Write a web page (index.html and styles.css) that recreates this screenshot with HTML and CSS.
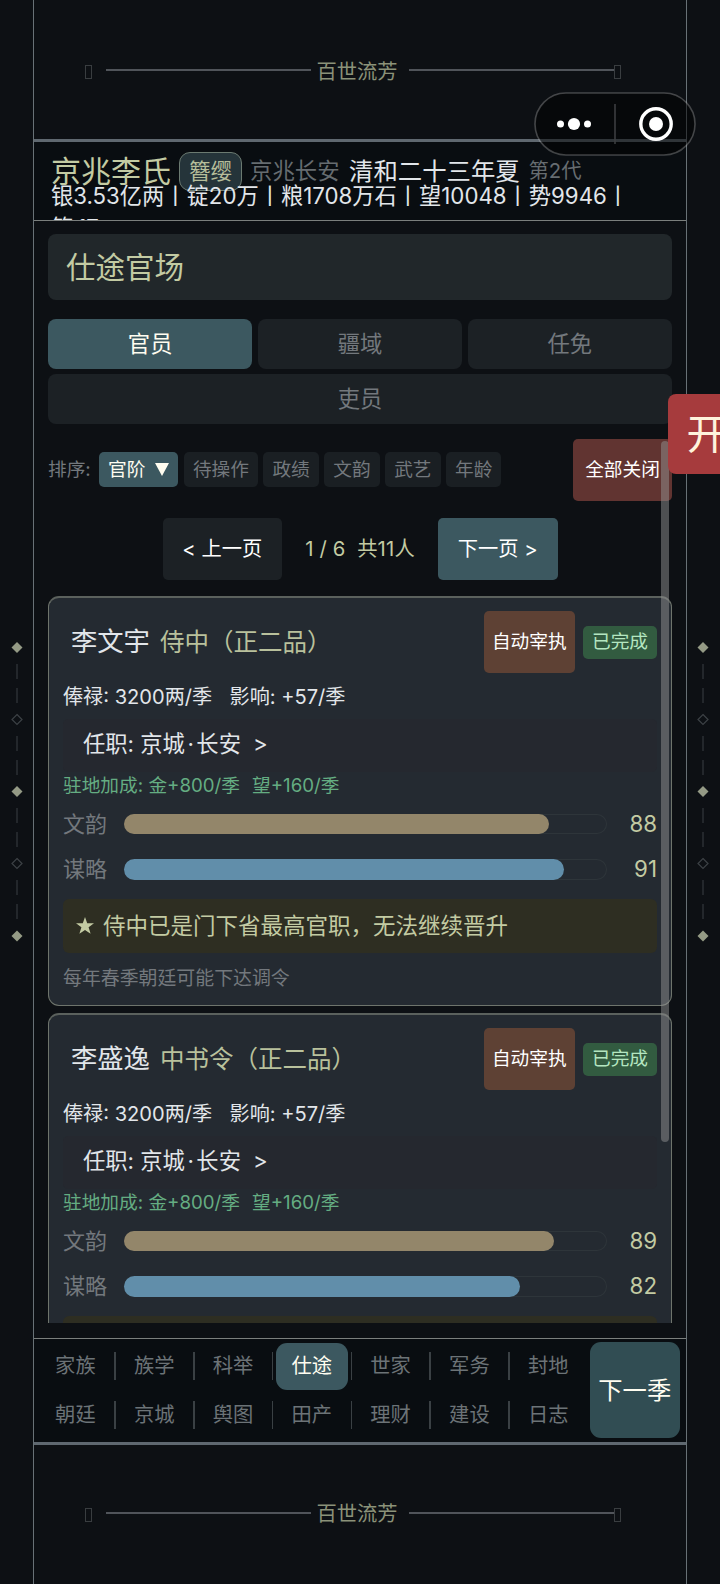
FILE: index.html
```html
<!DOCTYPE html>
<html lang="zh-CN">
<head>
<meta charset="utf-8">
<title>百世流芳</title>
<link rel="stylesheet" href="styles.css">
</head>
<body>
<div class="screen">
  <svg class="ornament" viewBox="0 0 16 300"><g class="gem"><path d="M8 2l5.500 5.500L8 13 2.500 7.500z"/><path d="M8 146l5.500 5.500L8 157l-5.500-5.500z"/><path d="M8 290.500l5.500 5.500L8 301.500l-5.500-5.500z"/></g><g class="hollow"><path d="M8 74.500l5 5-5 5-5-5z"/><path d="M8 218.500l5 5-5 5-5-5z"/></g><path class="dash" d="M8 24v15M8 48v15M8 96v15M8 120v15M8 168v15M8 192v15M8 240v15M8 264v15"/></svg>

  <div class="frame">
    <div class="banner banner-top">
      <i class="box"></i><i class="rule"></i><span>百世流芳</span><i class="rule"></i><i class="box box-end"></i>
    </div>

    <header class="status">
      <div class="identity">
        <b class="clan">京兆李氏</b><span class="tier">簪缨</span><span class="seat">京兆长安</span><span class="date">清和二十三年夏</span><span class="gen">第2代</span>
      </div>
      <div class="resources">银3.53亿两丨锭20万丨粮1708万石丨望10048丨势9946丨<br>筹<span class="count">17</span></div>
    </header>

    <main class="content">
      <h1 class="title">仕途官场</h1>
      <nav class="tabs">
        <span class="tab on">官员</span><span class="tab">疆域</span><span class="tab">任免</span><span class="tab wide">吏员</span>
      </nav>
      <div class="sort">
        <span class="sort-label">排序:</span>
        <span class="chip on">官阶 <svg class="caret" viewBox="0 0 14 13"><path d="M0 0h14L7 13z"/></svg></span><span class="chip">待操作</span><span class="chip">政绩</span><span class="chip">文韵</span><span class="chip">武艺</span><span class="chip">年龄</span>
        <span class="close-all">全部关闭</span>
      </div>
      <div class="pager">
        <span class="page-btn">&lt; 上一页</span><span class="page-info">1 / 6&nbsp; 共11人</span><span class="page-btn next">下一页 &gt;</span>
      </div>

      <article class="card">
        <div class="card-head"><span class="name">李文宇</span><span class="rank">侍中（正二品）</span><span class="auto">自动宰执</span><span class="done">已完成</span></div>
        <div class="salary"><span>俸禄: 3200两/季</span><span>影响: +57/季</span></div>
        <div class="post"><span>任职: 京城<i class="dot">·</i>长安</span><span>&gt;</span></div>
        <div class="bonus"><span>驻地加成: 金+800/季</span><span>望+160/季</span></div>
        <div class="stat"><span>文韵</span><div class="track"><div class="fill gold" style="width:88%"></div></div><b>88</b></div>
        <div class="stat"><span>谋略</span><div class="track"><div class="fill blue" style="width:91%"></div></div><b>91</b></div>
        <div class="notice"><svg class="star" viewBox="0 0 18 17"><path d="M9 0l2.200 6.300H18l-5.400 4 2 6.500L9 12.900l-5.600 3.900 2-6.500L0 6.300h6.800z"/></svg>侍中已是门下省最高官职，无法继续晋升</div>
        <p class="hint">每年春季朝廷可能下达调令</p>
      </article>

      <article class="card">
        <div class="card-head"><span class="name">李盛逸</span><span class="rank">中书令（正二品）</span><span class="auto">自动宰执</span><span class="done">已完成</span></div>
        <div class="salary"><span>俸禄: 3200两/季</span><span>影响: +57/季</span></div>
        <div class="post"><span>任职: 京城<i class="dot">·</i>长安</span><span>&gt;</span></div>
        <div class="bonus"><span>驻地加成: 金+800/季</span><span>望+160/季</span></div>
        <div class="stat"><span>文韵</span><div class="track"><div class="fill gold" style="width:89%"></div></div><b>89</b></div>
        <div class="stat"><span>谋略</span><div class="track"><div class="fill blue" style="width:82%"></div></div><b>82</b></div>
        <div class="notice"></div>
      </article>
      <i class="scrollbar"></i>
    </main>

    <footer class="dock">
      <div class="menu">
        <span>家族</span><span>族学</span><span>科举</span><span class="on"><em>仕途</em></span><span>世家</span><span>军务</span><span>封地</span>
        <span>朝廷</span><span>京城</span><span>舆图</span><span>田产</span><span>理财</span><span>建设</span><span>日志</span>
      </div>
      <div class="advance">下一季</div>
    </footer>

    <div class="banner banner-bottom">
      <i class="box"></i><i class="rule"></i><span>百世流芳</span><i class="rule"></i><i class="box box-end"></i>
    </div>
  </div>

  <svg class="ornament right" viewBox="0 0 16 300"><g class="gem"><path d="M8 2l5.500 5.500L8 13 2.500 7.500z"/><path d="M8 146l5.500 5.500L8 157l-5.500-5.500z"/><path d="M8 290.500l5.500 5.500L8 301.500l-5.500-5.500z"/></g><g class="hollow"><path d="M8 74.500l5 5-5 5-5-5z"/><path d="M8 218.500l5 5-5 5-5-5z"/></g><path class="dash" d="M8 24v15M8 48v15M8 96v15M8 120v15M8 168v15M8 192v15M8 240v15M8 264v15"/></svg>

  <svg class="capsule" viewBox="0 0 162 64"><rect x="1" y="1" width="160" height="62" rx="31"/><path d="M81 12v40"/><g><circle cx="26.500" cy="32" r="3.500"/><circle cx="40" cy="32" r="6.100"/><circle cx="53.500" cy="32" r="3.500"/><circle cx="122" cy="32" r="7"/></g><circle class="ring" cx="122" cy="32" r="15.200"/></svg>
  <div class="float-tab">开</div>
</div>
</body>
</html>
```

FILE: styles.css
```css
* { box-sizing: border-box; }
body { margin: 0; background: #0d1014; }
i, em { font-style: normal; }
b, h1 { font-weight: 400; }

.screen {
  position: relative;
  display: flex;
  width: 720px;
  height: 1584px;
  overflow: hidden;
  background: #0d1014;
  color: #e2e6ea;
  font-family: Inter, "Noto Sans CJK SC", sans-serif;
  font-size: 22px;
  line-height: 1;
  white-space: nowrap;
}

/* side ornaments */
.ornament { flex: none; width: 16px; height: 300px; margin: 640px 8px 0 9px; overflow: visible; }
.ornament.right { margin-left: 8px; }
.gem { fill: #949a85; }
.hollow { fill: none; stroke: #3c4145; stroke-width: 1.2; }
.dash { fill: none; stroke: #262b2f; stroke-width: 1.8; }

.frame {
  flex: none;
  display: flex;
  flex-direction: column;
  width: 654px;
  height: 1584px;
  border: solid #687176;
  border-width: 0 1px;
}

.banner { display: flex; align-items: center; padding-left: 51px; font-size: 20.3px; color: #8b9279; }
.banner-top { height: 139px; padding-top: 5px; }
.banner-bottom { height: 139px; }
.banner span { margin: 0 11px 0 6px; width: 81.500px; }
.rule { width: 205px; height: 2px; margin-bottom: 3px; background: #50545a; }
.box { width: 7px; height: 14px; margin: 1px 13.500px 0 0; border: 1px solid #393d40; }
.box-end { margin-right: 0; }

/* clan status header */
.status {
  height: 82px;
  padding: 10px 17px 0;
  overflow: hidden;
  border-top: 3px solid #5f6870;
  border-bottom: 1px solid #7b7f7d;
  background: #090d11;
}
.identity { display: flex; align-items: center; height: 39px; }
.clan { width: 128px; font-size: 30px; color: #c3cba3; }
.tier {
  display: flex; align-items: center; justify-content: center;
  width: 63px; height: 39px;
  border: 1px solid #6b7a71; border-radius: 11px;
  background: #25343a; color: #b5bd9a; font-size: 21.500px;
}
.seat { width: 99px; margin-left: 8px; font-size: 22.400px; color: #666c70; }
.date { width: 179.500px; font-size: 24.400px; }
.gen { font-size: 20.300px; color: #666c70; }
.resources { position: relative; margin-top: -11px; font-size: 22.250px; line-height: 32px; }
.count { margin-left: 4px; }

/* scrolling content */
.content { position: relative; height: 1103px; padding: 13px 14px 0; overflow: hidden; }
.title {
  height: 66px; margin: 0 0 19.500px; padding-left: 18px;
  border-radius: 8px; background: #21272a; color: #c3cba3;
  font-size: 29.500px; line-height: 66px;
}
.tabs { display: grid; grid-template-columns: repeat(3, 1fr); gap: 5.500px; }
.tab {
  display: flex; align-items: center; justify-content: center;
  height: 49.500px; border-radius: 8px; background: #1c2125; color: #73787d; font-size: 22.300px;
}
.tab.on, .chip.on, .next { background: #3c5860; color: #fffdf0; }
.wide { grid-column: 1 / -1; }

.sort { display: flex; align-items: center; gap: 5.500px; height: 62px; margin-top: 15px; font-size: 18.700px; }
.sort-label { width: 45.500px; color: #73787d; }
.chip {
  display: flex; align-items: center; justify-content: center;
  height: 35px; padding: 0 9px; border-radius: 5px; background: #1a1f23; color: #73787d;
}
.caret { width: 14px; height: 13px; margin-left: 10px; fill: #fffdf0; }
.close-all {
  display: flex; align-items: center; justify-content: center;
  width: 99px; height: 62px; margin-left: auto;
  border-radius: 5px; background: #613431; color: #fff; font-size: 18.700px;
}

.pager { display: flex; align-items: center; justify-content: center; margin: 17px 0 16px; font-size: 20.300px; }
.page-btn {
  display: flex; align-items: center; justify-content: center;
  width: 119.500px; height: 62px; border-radius: 5px; background: #1c2125; color: #fff;
}
.page-btn.next { background: #3c5860; }
.page-info { width: 156px; text-align: center; color: #c3cba3; letter-spacing: .15px; }

/* official cards */
.card {
  display: flex; flex-direction: column;
  height: 410px; margin-bottom: 7px; padding: 13.500px 14px 0;
  border: 1px solid #6e746c; border-top: 2px solid #5b615d; border-radius: 11px; background: #242a31;
}
.card-head { display: flex; align-items: center; height: 62px; padding-left: 8px; }
.name { width: 89px; font-size: 26.300px; }
.rank { flex: 1; font-size: 24.500px; color: #b9c19c; }
.auto, .done { display: flex; align-items: center; justify-content: center; border-radius: 5px; font-size: 18.700px; }
.auto { width: 90.500px; height: 62px; background: #5e4134; color: #fff; }
.done { width: 74px; height: 32.500px; margin-left: 8.500px; background: #325b40; color: #b4e6c0; }
.salary { display: flex; gap: 17.500px; margin-top: 14px; font-size: 20.100px; line-height: 20px; }
.post {
  display: flex; gap: 12px; height: 53px; margin-top: 12px; padding-left: 20px;
  border-radius: 5px; background: #25282f; font-size: 22.300px; line-height: 50px;
}
.dot { padding: 0 2.500px; }
.bonus { display: flex; gap: 12px; margin: 4px 0 8.500px; color: #64ad82; font-size: 18.700px; line-height: 20px; }
.stat { display: flex; align-items: center; height: 38px; margin-bottom: 7.500px; }
.stat span { width: 61px; font-size: 22px; color: #73787d; }
.stat b { flex: 1; text-align: right; font-size: 22.300px; color: #c3cba3; }
.track { width: 483px; height: 20.500px; border-radius: 10.500px; box-shadow: inset 0 0 0 1px #2e353a; }
.fill { height: 100%; border-radius: 10.500px; }
.gold { background: #93866a; }
.blue { background: #618eaa; }
.notice {
  display: flex; align-items: center; flex: none; height: 54px; margin-top: 3px; padding-left: 13px;
  border-radius: 6px; background: #2e2e22; color: #c3cba3; font-size: 22.500px;
}
.star { width: 18px; height: 17px; margin-right: 9px; fill: #c3cba3; }
.hint { margin: 16px 0 0; font-size: 18.900px; line-height: 20px; color: #73787d; }
.scrollbar {
  position: absolute; right: 17px; top: 220px;
  width: 8.500px; height: 701px; border-radius: 4px; background: rgba(150, 150, 150, .48);
}

/* bottom menu */
.dock {
  display: flex; height: 107px; margin-top: 15px; padding: 3px 6px 0 2px;
  border-top: 1px solid #7b7f7d; border-bottom: 3px solid #5f6870; background: #090d11;
}
.menu { display: grid; grid-template-columns: repeat(7, 78.800px); grid-template-rows: 49px 49px; font-size: 20.300px; color: #6c7377; }
.menu span { display: flex; align-items: center; justify-content: center; position: relative; }
.menu span:not(:nth-child(7n))::after { content: ""; position: absolute; right: -1px; top: 10px; width: 1.500px; height: 28px; background: #3a4044; }
.menu em {
  display: flex; align-items: center; justify-content: center;
  width: 72px; height: 47px; border-radius: 11px; background: #3c5860; color: #fffdf0;
}
.advance {
  display: flex; align-items: center; justify-content: center;
  width: 90.500px; height: 96px; margin-left: auto;
  border-radius: 11px; background: #314d53; color: #fffdf0; font-size: 24.300px;
}

/* overlays */
.capsule { position: absolute; left: 534px; top: 92px; width: 162px; height: 64px; fill: #fff; }
.capsule rect { fill: rgba(0, 0, 0, .5); stroke: rgba(255, 255, 255, .24); stroke-width: 1.600px; }
.capsule path { stroke: #3c3e40; stroke-width: 1.600px; }
.capsule .ring { fill: none; stroke: #fff; stroke-width: 3.400px; }
.float-tab {
  position: absolute; left: 667.500px; top: 394px; width: 90px; height: 79.500px;
  padding-left: 19px; border-radius: 8px 0 0 8px; background: #a63b3d;
  color: #fff3dc; font-size: 41px; line-height: 80px;
}
```
